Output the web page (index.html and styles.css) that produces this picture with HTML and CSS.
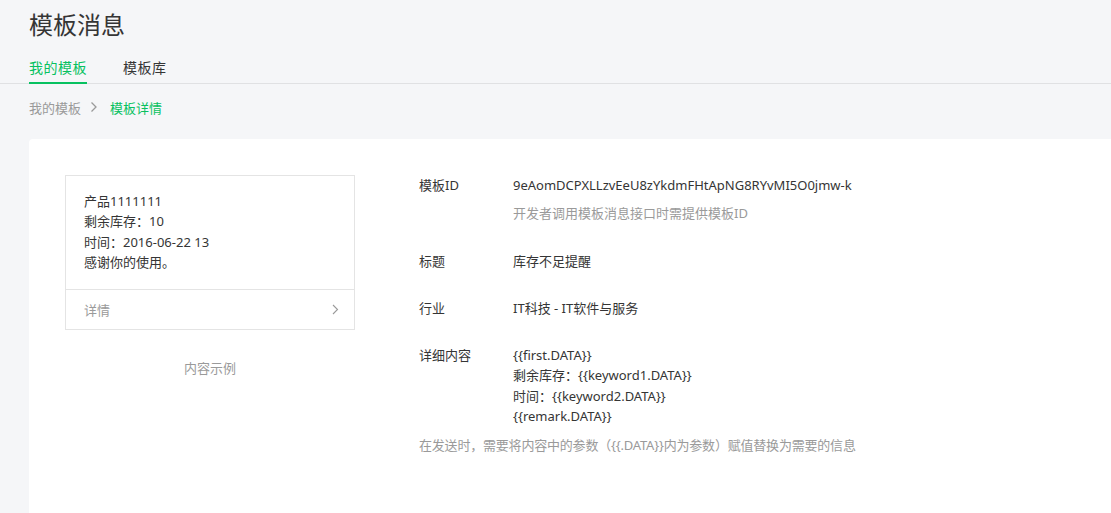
FILE: index.html
```html
<!DOCTYPE html>
<html lang="zh-CN">
<head>
<meta charset="utf-8">
<title>模板消息</title>
<link rel="stylesheet" href="styles.css">
</head>
<body>
<div class="page">
  <h1 class="title">模板消息</h1>
  <div class="tabs">
    <a class="tab active">我的模板</a>
    <a class="tab">模板库</a>
  </div>
  <div class="crumbs">
    <span class="crumb">我的模板</span>
    <svg class="crumb-arrow" width="8" height="12" viewBox="0 0 8 12"><path d="M1.5 1.5 L6 6 L1.5 10.5" fill="none" stroke="#9a9a9a" stroke-width="1.3"/></svg>
    <span class="crumb current">模板详情</span>
  </div>
  <div class="card">
    <div class="preview-col">
      <div class="preview">
        <div class="preview-body">
          <div>产品1111111</div>
          <div>剩余库存：10</div>
          <div>时间：2016-06-22 13</div>
          <div>感谢你的使用。</div>
        </div>
        <div class="preview-foot">
          <span>详情</span>
          <svg width="7" height="11" viewBox="0 0 7 11"><path d="M1 1 L5.5 5.5 L1 10" fill="none" stroke="#9a9a9a" stroke-width="1.1"/></svg>
        </div>
      </div>
      <div class="preview-caption">内容示例</div>
    </div>
    <div class="info">
      <div class="row">
        <div class="label">模板ID</div>
        <div class="value">
          <div>9eAomDCPXLLzvEeU8zYkdmFHtApNG8RYvMI5O0jmw-k</div>
          <div class="hint sub">开发者调用模板消息接口时需提供模板ID</div>
        </div>
      </div>
      <div class="row">
        <div class="label">标题</div>
        <div class="value">库存不足提醒</div>
      </div>
      <div class="row">
        <div class="label">行业</div>
        <div class="value">IT科技 - IT软件与服务</div>
      </div>
      <div class="row last">
        <div class="label">详细内容</div>
        <div class="value">
          <div>{{first.DATA}}</div>
          <div>剩余库存：{{keyword1.DATA}}</div>
          <div>时间：{{keyword2.DATA}}</div>
          <div>{{remark.DATA}}</div>
        </div>
      </div>
      <div class="hint note">在发送时，需要将内容中的参数（{{.DATA}}内为参数）赋值替换为需要的信息</div>
    </div>
  </div>
</div>
</body>
</html>
```

FILE: styles.css
```css
html, body {
  margin: 0;
  padding: 0;
}
body {
  background: #f5f6f8;
  font-family: "Noto Sans", "Noto Sans CJK SC", sans-serif;
  color: #353535;
  font-size: 13px;
  overflow: hidden;
}
.page {
  box-sizing: border-box;
  height: 100vh;
  padding-top: 8px;
  display: flex;
  flex-direction: column;
}
.title {
  margin: 0 0 0 29px;
  font-size: 24px;
  font-weight: normal;
  line-height: 34px;
  color: #353535;
}
.tabs {
  display: flex;
  margin-top: 12px;
  padding-left: 29px;
  border-bottom: 1px solid #e0e1e3;
}
.tab {
  font-size: 14px;
  letter-spacing: 0.5px;
  line-height: 20px;
  padding: 4px 0 4px;
  margin-right: 36px;
  color: #353535;
  border-bottom: 2px solid transparent;
  margin-bottom: -1px;
}
.tab.active {
  color: #07c160;
  border-bottom-color: #07c160;
}
.crumbs {
  display: flex;
  align-items: center;
  padding-left: 29px;
  margin-top: 13px;
  height: 20px;
  font-size: 13px;
}
.crumb {
  color: #9a9a9a;
}
.crumb.current {
  color: #07c160;
}
.crumb-arrow {
  margin: 0 12px 0 9px;
}
.card {
  flex: 1;
  display: flex;
  margin-top: 22px;
  margin-left: 29px;
  background: #fff;
  border-radius: 4px 0 0 0;
  padding: 36px 0 0 36px;
  gap: 64px;
}
.preview-col {
  width: 290px;
  flex: none;
}
.preview {
  border: 1px solid #e4e4e4;
}
.preview-body {
  padding: 15px 18px 17px;
  line-height: 20.3px;
  color: #353535;
}
.preview-foot {
  display: flex;
  align-items: center;
  justify-content: space-between;
  border-top: 1px solid #e4e4e4;
  height: 39px;
  padding: 0 15px 0 18px;
  color: #9a9a9a;
}
.preview-caption {
  text-align: center;
  margin-top: 28px;
  line-height: 20px;
  color: #9a9a9a;
}
.info {
  flex: 1;
}
.row {
  display: flex;
  line-height: 20.3px;
  margin-bottom: 27px;
}
.row.last {
  margin-bottom: 9px;
}
.label {
  width: 94px;
  flex: none;
}
.hint {
  color: #9a9a9a;
}
.hint.sub {
  margin-top: 8px;
}
.note {
  line-height: 20px;
  letter-spacing: -0.2px;
}
```
